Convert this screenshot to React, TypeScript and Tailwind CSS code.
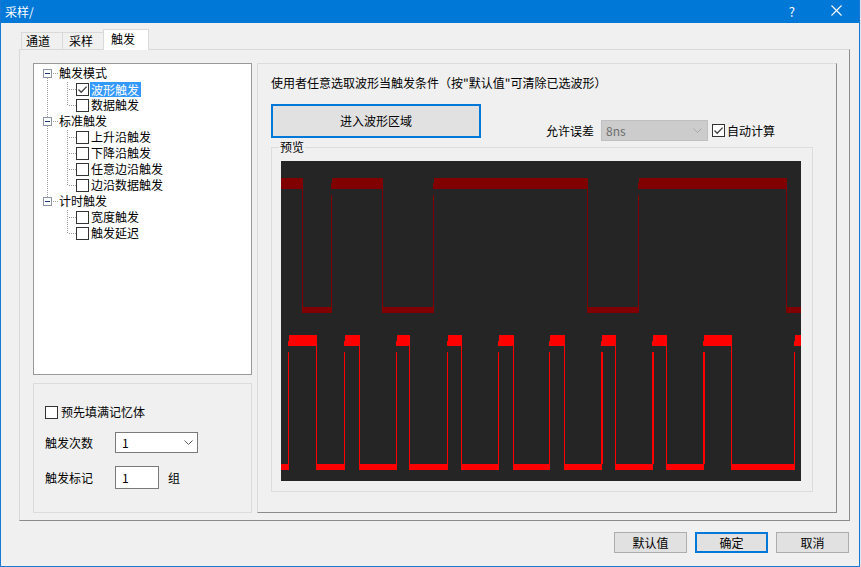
import React from "react";

type Trans = [number, number]; // [column, width]

function Wave({
  color,
  startHigh,
  trans,
  hiTop,
  hiMid,
  hiBot,
  riseTop,
  loTop,
  loBot,
}: {
  color: string;
  startHigh: boolean;
  trans: Trans[];
  hiTop: number;
  hiMid: number;
  hiBot: number;
  riseTop: number;
  loTop: number;
  loBot: number;
}) {
  const rects: React.ReactNode[] = [];
  let high = startHigh;
  let x = 281;
  let fromRise = false;
  const end = 801;
  const pushHigh = (a: number, b: number, rise: boolean) => {
    rects.push(<rect key={rects.length} x={rise ? a + 1 : a} y={hiTop} width={b - (rise ? a + 1 : a)} height={hiMid - hiTop} fill={color} />);
    rects.push(<rect key={rects.length} x={a} y={hiMid} width={b - a} height={hiBot - hiMid} fill={color} />);
  };
  for (const [c, w] of trans) {
    if (high) {
      pushHigh(x, c + 1, fromRise);
      rects.push(<rect key={rects.length} x={c} y={hiBot} width={w} height={loTop - hiBot} fill={color} />);
      x = c;
      high = false;
      fromRise = false;
    } else {
      rects.push(<rect key={rects.length} x={x} y={loTop} width={c + 1 - x} height={loBot - loTop} fill={color} />);
      rects.push(<rect key={rects.length} x={c} y={riseTop} width={w} height={loTop - riseTop} fill={color} />);
      x = c;
      high = true;
      fromRise = true;
    }
  }
  if (high) pushHigh(x, end, fromRise);
  else rects.push(<rect key={rects.length} x={x} y={loTop} width={end - x} height={loBot - loTop} fill={color} />);
  return <g>{rects}</g>;
}

function Check({ checked = false }: { checked?: boolean }) {
  return (
    <span className="w-[13px] h-[13px] shrink-0 border border-[#333333] bg-white flex items-center justify-center">
      {checked && (
        <svg width="11" height="11" viewBox="0 0 11 11">
          <path d="M1.5 5.5 L4.2 8.2 L9.6 2.6" fill="none" stroke="#404040" strokeWidth="1.3" />
        </svg>
      )}
    </span>
  );
}

function Chevron({ color }: { color: string }) {
  return (
    <svg width="9" height="5" viewBox="0 0 9 5">
      <path d="M0.5 0.5 L4.5 4.5 L8.5 0.5" fill="none" stroke={color} strokeWidth="1" />
    </svg>
  );
}

const dv = (x: number, y1: number, y2: number) => {
  const out: React.ReactNode[] = [];
  for (let y = y1; y < y2; y++) if (y % 2 === 1) out.push(<rect key={`v${x}-${y}`} x={x} y={y} width={1} height={1} fill="#a0a0a0" />);
  return out;
};
const dh = (x1: number, x2: number, y: number) => {
  const out: React.ReactNode[] = [];
  for (let x = x1; x < x2; x++) if (x % 2 === 1) out.push(<rect key={`h${x}-${y}`} x={x} y={y} width={1} height={1} fill="#a0a0a0" />);
  return out;
};

type Node = { label: string; level: 0 | 1; first?: boolean; lastTop?: boolean; cont?: boolean; last?: boolean; checked?: boolean; selected?: boolean };

const tree: Node[] = [
  { label: "触发模式", level: 0, first: true },
  { label: "波形触发", level: 1, cont: true, checked: true, selected: true },
  { label: "数据触发", level: 1, cont: true, last: true },
  { label: "标准触发", level: 0 },
  { label: "上升沿触发", level: 1, cont: true },
  { label: "下降沿触发", level: 1, cont: true },
  { label: "任意边沿触发", level: 1, cont: true },
  { label: "边沿数据触发", level: 1, cont: true, last: true },
  { label: "计时触发", level: 0, lastTop: true },
  { label: "宽度触发", level: 1 },
  { label: "触发延迟", level: 1, last: true },
];

function TreeRow({ n }: { n: Node }) {
  if (n.level === 0) {
    return (
      <div className="h-[16px] flex items-center">
        <svg width="25" height="16" shapeRendering="crispEdges" className="shrink-0">
          {!n.first && dv(13, 0, 4)}
          {!n.lastTop && dv(13, 13, 16)}
          <rect x="9.5" y="4.5" width="8" height="8" fill="white" stroke="#8c96a8" />
          <rect x="11" y="8" width="5" height="1" fill="#1f3b7a" />
          {dh(18, 25, 8)}
        </svg>
        <span>{n.label}</span>
      </div>
    );
  }
  return (
    <div className="h-[16px] flex items-center">
      <svg width="42" height="16" shapeRendering="crispEdges" className="shrink-0">
        {n.cont && dv(13, 0, 16)}
        {dv(33, 0, n.last ? 9 : 16)}
        {dh(34, 42, 8)}
      </svg>
      <Check checked={n.checked} />
      <span className={n.selected ? "ml-px h-[15px] leading-[15px] pl-px pr-[2px] bg-[#3399ff] text-white" : "ml-px pl-px"}>{n.label}</span>
    </div>
  );
}

export default function App() {
  const topTrans: Trans[] = [[302, 1], [331, 1], [382, 1], [433, 1], [587, 1], [638, 1], [786, 1]];
  const botTrans: Trans[] = [
    [288, 1], [316, 1], [344, 1], [359, 1], [396, 1], [409, 1], [447, 1], [461, 1], [498, 1], [513, 1],
    [549, 1], [564, 1], [601, 2], [615, 1], [652, 2], [666, 1], [703, 2], [731, 1], [794, 1],
  ];
  return (
    <div className="w-[861px] h-[567px] flex overflow-hidden bg-[#dde3ea] font-['Noto_Sans_CJK_SC','Microsoft_YaHei',sans-serif] text-[12px] leading-[16px] text-black">
      <div className="w-[860px] h-full flex flex-col bg-[#f0f0f0] border-x border-b border-[#1a78d4]">
        {/* title bar */}
        <div className="h-[23px] shrink-0 bg-[#0078d7] flex items-center text-white pl-[4px]">
          <span>采样/</span>
          <span className="ml-auto text-[13px]">?</span>
          <svg width="11" height="11" viewBox="0 0 11 11" className="ml-[36px] mr-[17px] mb-[2px]">
            <path d="M0.5 0.5 L10.5 10.5 M10.5 0.5 L0.5 10.5" stroke="white" strokeWidth="1.1" />
          </svg>
        </div>

        <div className="flex flex-col pl-[18px] pt-[6px]">
          {/* tabs */}
          <div className="flex items-end h-[20px] pl-[2px] relative z-10">
            <div className="w-[42px] h-[17px] border border-b-0 border-[#d9d9d9] bg-[#f0f0f0] pl-[4px] leading-[16px]">通道</div>
            <div className="-ml-px w-[42px] h-[17px] border border-b-0 border-[#d9d9d9] bg-[#f0f0f0] pl-[6px] leading-[16px]">采样</div>
            <div className="-ml-px -mb-px w-[46px] h-[21px] border border-b-0 border-[#d9d9d9] bg-white pl-[7px] pt-px leading-[16px]">触发</div>
          </div>

          {/* tab page */}
          <div className="w-[831px] h-[472px] border border-[#d9d9d9] border-r-[#8c8c8c] border-b-[#8c8c8c] flex gap-[5px] pt-[13px] pl-[13px]">
            <div className="w-[219px] flex flex-col gap-[8px]">
              <div className="h-[312px] bg-white border border-[#999999] pt-px">
                {tree.map((n) => (
                  <TreeRow key={n.label} n={n} />
                ))}
              </div>
              <div className="h-[130px] border border-[#dcdcdc] pl-[11px] pt-[20px] flex flex-col">
                <div className="h-[16px] flex items-center">
                  <Check />
                  <span className="ml-[3px]">预先填满记忆体</span>
                </div>
                <div className="mt-[12px] h-[21px] flex items-center">
                  <span className="w-[70px]">触发次数</span>
                  <div className="w-[83px] h-[21px] bg-white border border-[#7a7a7a] flex items-center justify-between pl-[6px] pr-[4px]">
                    <span>1</span>
                    <Chevron color="#606060" />
                  </div>
                </div>
                <div className="mt-[13px] h-[23px] flex items-center">
                  <span className="w-[70px]">触发标记</span>
                  <div className="w-[44px] h-[23px] bg-white border border-[#7a7a7a] flex items-center pl-[6px]">1</div>
                  <span className="ml-[9px]">组</span>
                </div>
              </div>
            </div>

            <div className="w-[580px] h-[450px] border border-[#dcdcdc] border-r-[#8c8c8c] border-b-[#8c8c8c] pl-[13px] pt-[11px] flex flex-col">
              <div>使用者任意选取波形当触发条件（按"默认值"可清除已选波形）</div>
              <div className="flex items-start mt-[13px]">
                <button className="w-[210px] h-[34px] border-2 border-[#0078d7] bg-[#e1e1e1]">进入波形区域</button>
                <div className="flex items-center mt-[16px] ml-[65px]">
                  <span>允许误差</span>
                  <div className="ml-[7px] w-[107px] h-[21px] bg-[#cccccc] border border-[#bfbfbf] flex items-center justify-between pl-[4px] pr-[5px] text-[#6d6d6d]">
                    <span>8ns</span>
                    <Chevron color="#a8a8a8" />
                  </div>
                  <span className="ml-[4px]">
                    <Check checked />
                  </span>
                  <span className="ml-[2px]">自动计算</span>
                </div>
              </div>
              <fieldset className="-mt-[2px] w-[542px] h-[353px] border border-[#dcdcdc] px-[9px] pt-[6px]">
                <legend className="-ml-[2px] px-px">预览</legend>
                <div className="w-[520px] h-[320px] bg-[#252525]">
                  <svg width="520" height="320" viewBox="281 161 520 320" shapeRendering="crispEdges">
                    <Wave color="#800000" startHigh trans={topTrans} hiTop={178} hiMid={183} hiBot={189} riseTop={195} loTop={307} loBot={313} />
                    <Wave color="#ff0000" startHigh={false} trans={botTrans} hiTop={335} hiMid={341} hiBot={346} riseTop={352} loTop={464} loBot={470} />
                  </svg>
                </div>
              </fieldset>
            </div>
          </div>

          {/* bottom buttons */}
          <div className="w-[831px] flex justify-end gap-[8px] mt-[11px] pr-px">
            <button className="w-[73px] h-[21px] border border-[#adadad] bg-[#e1e1e1]">默认值</button>
            <button className="w-[73px] h-[21px] border-2 border-[#0078d7] bg-[#e1e1e1]">确定</button>
            <button className="w-[73px] h-[21px] border border-[#adadad] bg-[#e1e1e1]">取消</button>
          </div>
        </div>
      </div>
    </div>
  );
}
